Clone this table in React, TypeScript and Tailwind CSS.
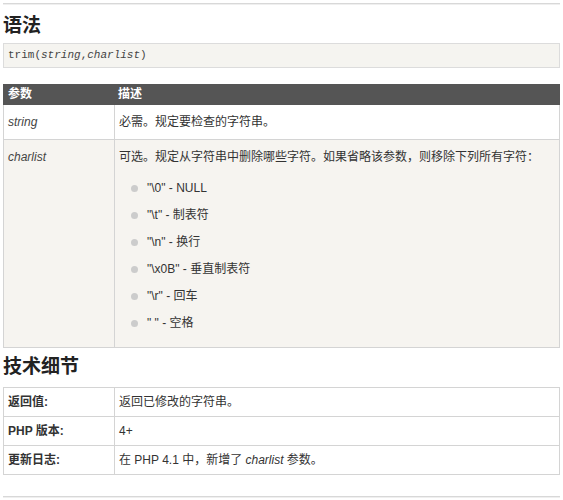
const font = "font-['Liberation_Sans','Noto_Sans_CJK_SC',sans-serif]";

const chars = [
  { code: '"\\0"', label: "NULL" },
  { code: '"\\t"', label: "制表符" },
  { code: '"\\n"', label: "换行" },
  { code: '"\\x0B"', label: "垂直制表符" },
  { code: '"\\r"', label: "回车" },
  { code: '" "', label: "空格" },
];

const details = [
  { label: "返回值:", value: <>返回已修改的字符串。</> },
  { label: "PHP 版本:", value: <>4+</> },
  {
    label: "更新日志:",
    value: (
      <>
        在 PHP 4.1 中，新增了 <i>charlist</i> 参数。
      </>
    ),
  },
];

const cellCls = "border border-[#d4d4d4] px-[4px] align-top";

export default function App() {
  return (
    <div className={`${font} w-[563px] h-[500px] bg-white px-[3px] pt-[3px] text-[12px] text-[#333]`}>
      <div className="h-[2px] border-t border-[#d8d8d8] bg-[#efefef]" />

      <h2 className="mt-[9px] text-[19px] leading-[24px] font-bold text-[#222]">语法</h2>
      <div className="mt-[5px] h-[25px] border border-[#dcdcdc] bg-[#f5f4f0] px-[4px] font-['Liberation_Mono',monospace] text-[11px] leading-[23px] text-[#444]">
        trim(<i>string</i>,<i>charlist</i>)
      </div>

      <table className="mt-[16px] w-full border-collapse">
        <thead>
          <tr className="bg-[#555555] text-left text-white">
            <th className="w-[111px] border border-[#555555] px-[4px] text-[12px] leading-[19px] font-bold">参数</th>
            <th className="border border-[#555555] px-[3px] text-[12px] leading-[19px] font-bold">描述</th>
          </tr>
        </thead>
        <tbody>
          <tr className="bg-white">
            <td className={`${cellCls} py-[10px] leading-[14px] italic text-[#444]`}>string</td>
            <td className={`${cellCls} py-[10px] leading-[14px]`}>必需。规定要检查的字符串。</td>
          </tr>
          <tr className="bg-[#f6f4f0]">
            <td className={`${cellCls} py-[10px] leading-[15px] italic text-[#444]`}>charlist</td>
            <td className={`${cellCls} pt-[10px] pb-[10px]`}>
              <p className="leading-[15px]">可选。规定从字符串中删除哪些字符。如果省略该参数，则移除下列所有字符：</p>
              <ul className="mt-[10px]">
                {chars.map((c) => (
                  <li key={c.code} className="flex items-center leading-[27px]">
                    <span className="ml-[12px] mr-[9px] h-[7px] w-[7px] rounded-full bg-[#cccccc]" />
                    <span>
                      {c.code} - {c.label}
                    </span>
                  </li>
                ))}
              </ul>
            </td>
          </tr>
        </tbody>
      </table>

      <h2 className="mt-[7px] text-[19px] leading-[24px] font-bold text-[#222]">技术细节</h2>
      <table className="mt-[8px] w-full border-collapse bg-white">
        <tbody>
          {details.map((d) => (
            <tr key={d.label}>
              <td className={`${cellCls} w-[111px] py-[7px] leading-[14px] font-bold`}>{d.label}</td>
              <td className={`${cellCls} py-[7px] leading-[14px]`}>{d.value}</td>
            </tr>
          ))}
        </tbody>
      </table>

      <div className="mt-[21px] h-[2px] border-t border-[#d8d8d8] bg-[#efefef]" />
    </div>
  );
}
